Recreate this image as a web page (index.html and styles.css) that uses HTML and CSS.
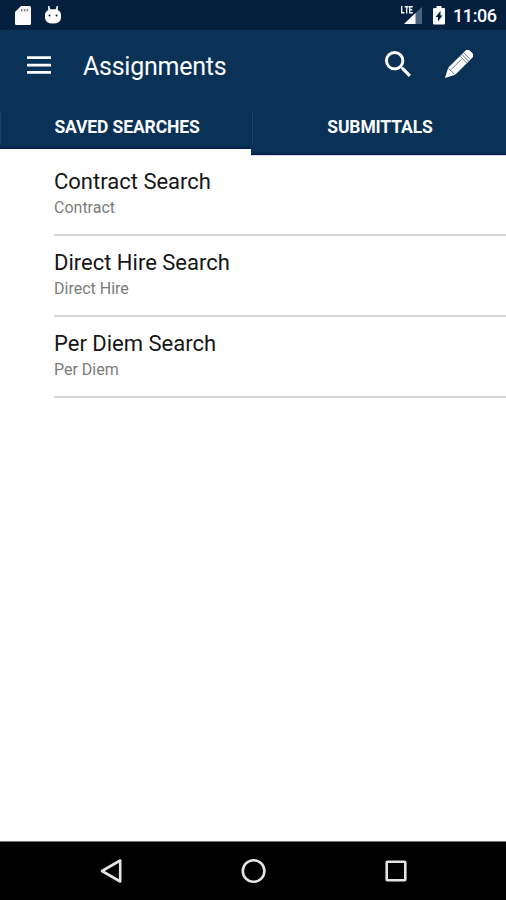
FILE: index.html
```html
<!DOCTYPE html>
<html lang="en">
<head>
<meta charset="utf-8">
<title>Assignments</title>
<link rel="stylesheet" href="styles.css">
</head>
<body>
<div class="screen">
  <div class="status">
    <svg class="status-sd" viewBox="0 0 16 19" width="16" height="19"><path class="fill" d="M6 0h8.500Q16 0 16 1.500v16Q16 19 14.500 19h-13Q0 19 0 17.500V6z"/><path class="mark" d="M6 3h1.500v2.500H6zM8.800 3h1.500v2.500H8.800zM11.600 3h1.500v2.500h-1.500z"/></svg>
    <svg class="status-bug" viewBox="0 0 16 19" width="16" height="19"><path class="fill" d="M3 0h1.300l1 3.200h5.400l1-3.200H13l-.3 4Q16 5.500 16 9v2.500q0 6-8 6t-8-6V9Q0 5.500 3.300 4z"/><circle class="hole" cx="4.500" cy="9.500" r="1"/><circle class="hole" cx="11.500" cy="9.500" r="1"/></svg>
    <span class="gap"></span>
    <svg class="status-signal" viewBox="0 0 22 19" width="22" height="19"><path class="dim" d="M22 1v17H4z"/><path class="fill" d="M15.500 7v11H4z"/><path class="cutout" d="M0 0h14v9H0z"/><path class="lte" d="M1.700 0v6.800h2.800M4.700 .7h4M6.700 .7v6.700M12.800 .7H9.700v6.100h3.100M9.700 3.700h2.700"/></svg>
    <svg class="status-battery" viewBox="0 0 12 19" width="12" height="19"><path class="fill" d="M3.500 0h5v2H11q1 0 1 1v14.500q0 1-1 1H1q-1 0-1-1V3q0-1 1-1h2.500z"/><path class="hole" d="M7.500 5v4.500h2L5 15.500v-4.500H2.500z"/></svg>
    <span class="clock">11:06</span>
  </div>
  <header class="appbar">
    <svg class="menu" viewBox="0 0 24 18" width="24" height="18"><path class="fill" d="M0 .3h24V3H0zM0 7.700h24v2.700H0zM0 15.100h24v2.700H0z"/></svg>
    <h1 class="title">Assignments</h1>
    <span class="gap"></span>
    <svg class="search" viewBox="3 3 17.500 17.500" width="26" height="26"><path class="fill" d="M15.500 14h-.79l-.28-.27A6.471 6.471 0 0 0 16 9.500 6.500 6.500 0 1 0 9.500 16c1.610 0 3.090-.59 4.230-1.570l.27.28v.79l5 4.990L20.490 19l-4.990-5zm-6 0C7.010 14 5 11.990 5 9.500S7.010 5 9.500 5 14 7.010 14 9.500 11.990 14 9.500 14z"/></svg>
    <svg class="pencil" viewBox="0 0 28 28" width="28" height="28"><g transform="translate(0 28) rotate(-45)"><path class="fill" d="M0 0L9.500-5H33q4 0 4 4v2q0 4-4 4H9.500z"/><path class="groove" d="M9.300-4.500v9M10-1.600h15M26-5v10M28.500-5v10M31-5v10"/></g></svg>
  </header>
  <nav class="tabs">
    <div class="tab active">SAVED SEARCHES</div>
    <div class="tab">SUBMITTALS</div>
  </nav>
  <main class="list">
    <div class="row"><div class="name">Contract Search</div><div class="kind">Contract</div></div>
    <div class="row"><div class="name">Direct Hire Search</div><div class="kind">Direct Hire</div></div>
    <div class="row"><div class="name">Per Diem Search</div><div class="kind">Per Diem</div></div>
  </main>
  <footer class="navbar">
    <svg viewBox="0 0 26 26" width="26" height="26"><path class="line" d="M22.200 2.500v21L4 13z"/></svg>
    <svg viewBox="0 0 26 26" width="26" height="26"><circle class="line" cx="12.600" cy="13" r="10.800"/></svg>
    <svg viewBox="0 0 26 26" width="26" height="26"><rect class="line" x="3.700" y="3.700" width="18.600" height="18.600" rx=".8"/></svg>
  </footer>
</div>
</body>
</html>
```
FILE: styles.css
```css
* { box-sizing: border-box; }
body { margin: 0; font-family: Roboto, sans-serif; background: #fff; }
svg { display: block; flex: none; }
.screen { width: 506px; height: 900px; display: flex; flex-direction: column; overflow: hidden; }
.gap { flex: 1; }
.fill { fill: #fcfcff; }
.hole { fill: #05203f; }
.mark { fill: #7d8795; }
.cutout { fill: #05203f; }
.dim { fill: #486580; }
.lte { fill: none; stroke: #eef1f6; stroke-width: 1.400; }

.status { height: 30px; flex: none; background: #05203f; display: flex; align-items: center; padding: 0 10px 0 15px; }
.status-bug { margin-left: 14px; }
.status-signal { margin-right: 11px; }
.clock { color: #fcfcff; font-size: 18px; font-weight: 500; letter-spacing: -.4px; line-height: 30px; width: 43px; margin-left: 8px; padding-top: 2px; white-space: nowrap; }

.appbar { height: 70px; flex: none; background: #0a3256; display: flex; align-items: center; padding: 0 33px 0 27px; }
.menu { margin-top: -1px; }
.title { margin: 3px 0 0 32px; font-size: 25px; font-weight: 400; letter-spacing: -.25px; line-height: 30px; color: #fcfcff; }
.search { margin-right: 34px; }
.search, .pencil { margin-top: -2px; }
.groove { stroke: #0a3256; stroke-width: .6; fill: none; }

.tabs { height: 56px; flex: none; display: flex; background: #0a3256; border-bottom: 1px solid #d9d7e8; }
.tab { flex: 1; height: 55px; line-height: 55px; padding-left: 3px; text-align: center; color: #fcfcff; font-size: 17.500px; font-weight: 700; letter-spacing: -.12px; border-bottom: 2px solid #07204f; background: linear-gradient(#1d4265, #1d4265) 1px 12px / 1px 32px no-repeat; }
.tab.active { flex: none; width: 251px; height: 56px; border-bottom: 7px solid #fff; box-shadow: inset 0 -2px #07204f; background-position: 0 12px; }

.list { flex: 1; background: #fff; }
.row { height: 81px; margin-left: 54px; padding-top: 12px; background: linear-gradient(#d5d5d5, #d5d5d5) 0 78px / 100% 2px no-repeat; }
.name { font-size: 22px; line-height: 28px; color: #161616; }
.kind { font-size: 16px; line-height: 24px; color: #7c7c7c; }

.navbar { height: 59px; flex: none; background: #000; border-top: 1px solid #777; display: flex; justify-content: space-between; padding: 16px 97px 0 98px; }
.line { fill: none; stroke: #e3e3e3; stroke-width: 2.600; stroke-linejoin: round; }
```
